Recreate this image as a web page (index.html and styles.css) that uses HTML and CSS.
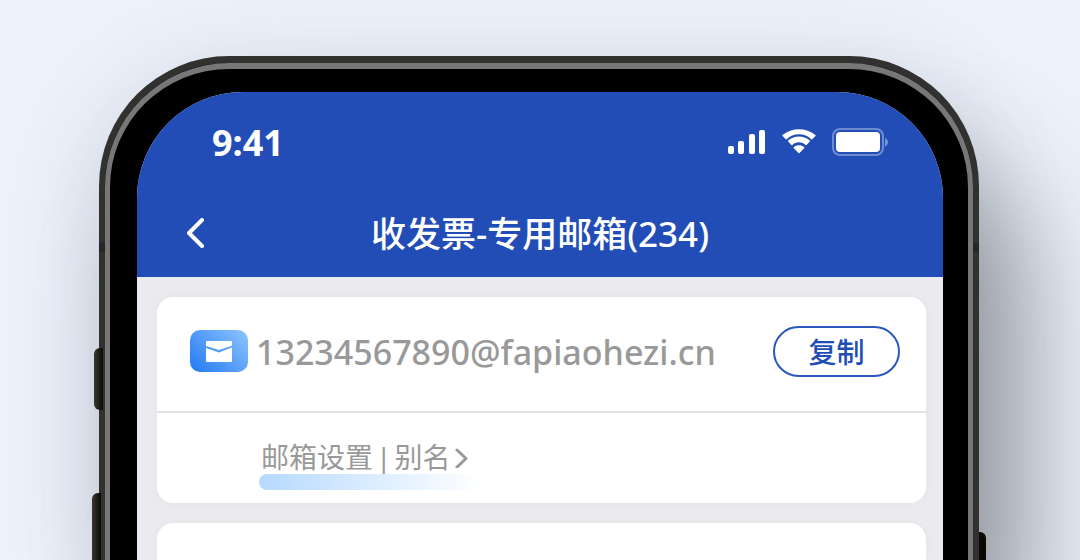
FILE: index.html
```
<!DOCTYPE html>
<html lang="zh-CN">
<head>
    <meta charset="UTF-8">
    <meta name="viewport" content="width=device-width, initial-scale=1.0">
    <title>收发票-专用邮箱</title>
    <link rel="stylesheet" href="styles.css">
</head>
<body>
    <div class="phone">
        <span class="side-key mute-key"></span>
        <span class="side-key volume-key"></span>
        <span class="side-key power-key"></span>
        <span class="antenna antenna-left"></span>
        <span class="antenna antenna-right"></span>

        <div class="bezel">
            <div class="screen">
                <header class="top">
                    <div class="status-bar">
                        <span class="time">9:41</span>
                        <div class="status-icons">
                            <svg width="38" height="26" viewBox="0 0 38 26" fill="#fff">
                                <rect x="0" y="17" width="6" height="8" rx="2"/>
                                <rect x="10" y="12" width="6" height="13" rx="2"/>
                                <rect x="21" y="5" width="6" height="20" rx="2"/>
                                <rect x="31" y="1" width="6" height="24" rx="2"/>
                            </svg>
                            <svg width="36" height="26" viewBox="0 0 36 26" fill="#fff">
                                <path d="M18 5.3c4.700 0 9 1.800 12.300 5 .3.300.6.300.9 0l3.200-3.300c.3-.3.3-.7 0-1C25.200-1.600 10.800-1.600 1.600 6c-.3.300-.3.700 0 1l3.200 3.300c.3.300.6.300.9 0C9 7.100 13.300 5.300 18 5.300z"/>
                                <path d="M18 13.300c2.500 0 4.800.9 6.600 2.600.3.300.7.300 1 0l3.200-3.300c.3-.3.3-.7 0-1-6.100-5.500-15.500-5.500-21.600 0-.3.300-.3.700 0 1l3.200 3.300c.3.300.7.300 1 0 1.800-1.700 4.100-2.600 6.600-2.600z"/>
                                <path d="M23.200 19.200c.3-.3.3-.7 0-1-3-2.500-7.400-2.500-10.400 0-.3.300-.3.700 0 1l4.700 4.900c.3.300.7.300 1 0z"/>
                            </svg>
                            <svg width="57" height="28" viewBox="0 0 57 28">
                                <rect x="1" y="1" width="50" height="26" rx="7" fill="none" stroke="#fff" stroke-opacity=".35" stroke-width="2"/>
                                <rect x="4" y="4" width="44" height="20" rx="4" fill="#fff"/>
                                <path d="M53 10v8.500c1.800-.7 3-2.300 3-4.200s-1.200-3.600-3-4.300z" fill="#fff" fill-opacity=".4"/>
                            </svg>
                        </div>
                    </div>
                    <nav class="nav-bar">
                        <button class="back-btn" type="button" aria-label="返回">
                            <svg width="20" height="32" viewBox="0 0 20 32" fill="none" stroke="#fff" stroke-width="4" stroke-linecap="round" stroke-linejoin="round">
                                <path d="M17 2 4 15 17 28"/>
                            </svg>
                        </button>
                        <h1>收发票-专用邮箱(234)</h1>
                    </nav>
                </header>

                <main class="content">
                    <section class="card">
                        <div class="mail-row">
                            <span class="mail-icon">
                                <svg width="28" height="22" viewBox="0 0 28 22" fill="#fff">
                                    <path d="M1 2q0-1 1-1h24q1 0 1 1v3.500L14 10 1 6z"/>
                                    <path d="M1 8l13 4.500L27 7.500V21q0 1-1 1H2q-1 0-1-1z"/>
                                </svg>
                            </span>
                            <span class="mail-address">13234567890@fapiaohezi.cn</span>
                            <button class="copy-btn" type="button">复制</button>
                        </div>
                        <div class="settings-row">
                            <a class="settings-link" href="#">
                                <span>邮箱设置</span>
                                <span>|</span>
                                <span>别名</span>
                                <svg width="16" height="22" viewBox="0 0 16 22" fill="none" stroke="#999" stroke-width="3" stroke-linecap="round" stroke-linejoin="round">
                                    <path d="M4 4 13 12.500 4 21"/>
                                </svg>
                            </a>
                        </div>
                    </section>
                    <section class="card next-card"></section>
                </main>
            </div>
        </div>
    </div>
</body>
</html>
```

FILE: styles.css
```
* {
    margin: 0;
    padding: 0;
    box-sizing: border-box;
}

body {
    display: flex;
    flex-direction: column;
    height: 100vh;
    padding: 56px 101px 0 99px;
    overflow: hidden;
    background: #ecf1fa;
    font-family: "Noto Sans", "Noto Sans CJK SC", sans-serif;
}

button {
    font-family: inherit;
    cursor: pointer;
}

svg {
    display: block;
}

/* Phone frame */
.phone {
    position: relative;
    flex: 1;
    display: flex;
    border: solid #31312f;
    border-width: 7px 6px 0;
    border-radius: 130px 130px 0 0;
    background: #000;
    box-shadow: 52px 100px 110px rgba(50, 52, 58, 0.42), 0 20px 90px rgba(90, 105, 125, 0.2);
}

.bezel {
    flex: 1;
    display: flex;
    border: solid #777;
    border-width: 6px 5px 0;
    border-radius: 124px 124px 0 0;
    padding: 23px 25px 0 27px;
    background: #000;
}

.side-key {
    position: absolute;
    background: linear-gradient(90deg, #38372f, #0c0a06);
}

.mute-key {
    top: 285px;
    left: -11px;
    width: 9px;
    height: 62px;
    border-radius: 6px 0 0 6px;
}

.volume-key {
    top: 430px;
    bottom: 0;
    left: -13px;
    width: 9px;
    border-radius: 6px 0 0 0;
}

.power-key {
    top: 469px;
    bottom: 0;
    right: -13px;
    width: 7px;
    border-radius: 0 6px 0 0;
    background: #0c0a06;
}

.antenna {
    position: absolute;
    top: 180px;
    width: 6px;
    height: 9px;
    background: #262626;
}

.antenna-left {
    left: -6px;
}

.antenna-right {
    right: -6px;
}

.screen {
    flex: 1;
    display: flex;
    flex-direction: column;
    overflow: hidden;
    border-radius: 106px 106px 0 0;
    background: #ebebef;
}

/* Header */
.top {
    background: #224db7;
    color: #fff;
}

.status-bar {
    display: flex;
    align-items: center;
    justify-content: space-between;
    height: 100px;
    padding: 0 54px 0 75px;
}

.time {
    font-size: 36px;
    font-weight: 700;
}

.status-icons {
    display: flex;
    align-items: center;
    gap: 15px;
}

.nav-bar {
    display: grid;
    grid-template-columns: 20px 1fr 20px;
    align-items: center;
    height: 85px;
    padding: 0 48px 2px;
}

.back-btn {
    border: none;
    background: none;
}

.nav-bar h1 {
    font-size: 35px;
    font-weight: 500;
    line-height: 48px;
    text-align: center;
}

/* Cards */
.content {
    flex: 1;
    display: flex;
    flex-direction: column;
    gap: 20px;
    padding: 20px 17px 0 20px;
}

.card {
    border-radius: 16px;
    background: #fff;
    box-shadow: 0 0 8px rgba(0, 0, 0, 0.04);
}

.mail-row {
    display: flex;
    align-items: center;
    height: 116px;
    padding: 0 26px 6px 33px;
    border-bottom: 2px solid #e3e3e3;
}

.mail-icon {
    display: flex;
    align-items: center;
    justify-content: center;
    width: 58px;
    height: 42px;
    border-radius: 10px;
    background: linear-gradient(45deg, #2279f2, #8fc5ff);
}

.mail-address {
    padding-top: 2px;
    margin-left: 8px;
    font-size: 34px;
    font-weight: 500;
    color: #999;
}

.copy-btn {
    width: 127px;
    height: 51px;
    margin-left: auto;
    border: 2px solid #2c57bd;
    border-radius: 26px;
    background: #fff;
    font-size: 28px;
    font-weight: 500;
    color: #224db7;
}

.settings-row {
    height: 90px;
    padding: 24px 0 0 102px;
}

.settings-link {
    position: relative;
    display: inline-flex;
    align-items: center;
    gap: 3px;
    width: 222px;
    padding-left: 2px;
    font-size: 28px;
    line-height: 40px;
    color: #999;
    text-decoration: none;
    white-space: nowrap;
}

.settings-link::after {
    content: "";
    position: absolute;
    left: 0;
    right: 0;
    bottom: -13px;
    height: 16px;
    border-radius: 8px;
    background: linear-gradient(90deg, #b5d9ff, #fff);
}

.next-card {
    flex: 1;
    border-radius: 16px 16px 0 0;
}
```
